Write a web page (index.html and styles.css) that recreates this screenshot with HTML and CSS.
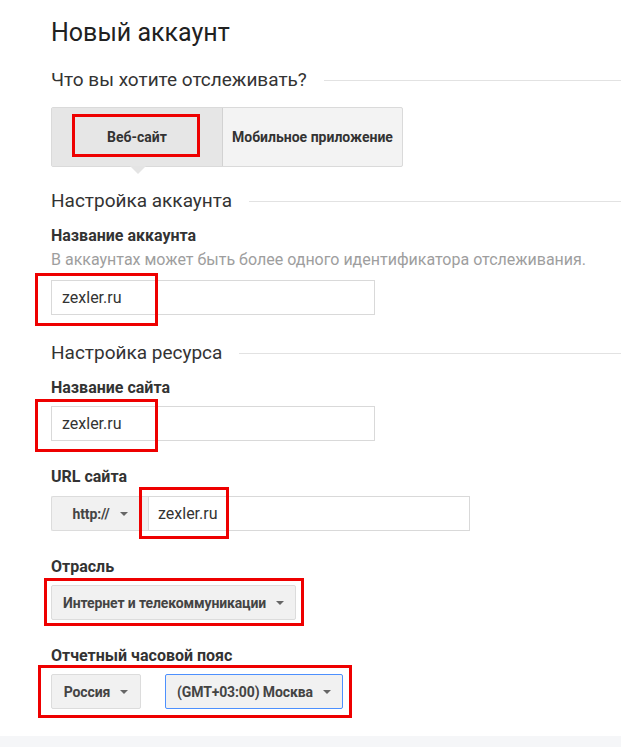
FILE: index.html
```html
<!DOCTYPE html>
<html lang="ru">
<head>
    <meta charset="UTF-8">
    <meta name="viewport" content="width=device-width, initial-scale=1.0">
    <title>Новый аккаунт</title>
    <link rel="stylesheet" href="styles.css">
</head>
<body>
    <div class="page">
        <h1 class="title">Новый аккаунт</h1>

        <div class="section-head section-track"><span>Что вы хотите отслеживать?</span></div>
        <div class="toggle">
            <div class="toggle-item active">
                Веб-сайт
                <span class="mark mark-web"></span>
            </div>
            <div class="toggle-item">Мобильное приложение</div>
        </div>

        <div class="section-head section-account"><span>Настройка аккаунта</span></div>
        <div class="label">Название аккаунта</div>
        <div class="help">В аккаунтах может быть более одного идентификатора отслеживания.</div>
        <div class="field field-first">
            <div class="input">zexler.ru</div>
            <span class="mark mark-input"></span>
        </div>

        <div class="section-head section-res"><span>Настройка ресурса</span></div>
        <div class="label">Название сайта</div>
        <div class="field">
            <div class="input">zexler.ru</div>
            <span class="mark mark-input"></span>
        </div>

        <div class="label label-gap">URL сайта</div>
        <div class="field url-row">
            <div class="select select-proto">http:// <span class="arrow"></span></div>
            <div class="input input-url">zexler.ru</div>
            <span class="mark mark-url"></span>
        </div>

        <div class="label label-gap">Отрасль</div>
        <div class="field field-inline">
            <div class="select">Интернет и телекоммуникации <span class="arrow"></span></div>
            <span class="mark mark-ind"></span>
        </div>

        <div class="label label-gap">Отчетный часовой пояс</div>
        <div class="field field-inline">
            <div class="select select-country">Россия <span class="arrow"></span></div>
            <div class="select select-zone">(GMT+03:00) Москва <span class="arrow"></span></div>
            <span class="mark mark-tz"></span>
        </div>
    </div>
    <div class="footer-band"></div>
</body>
</html>
```

FILE: styles.css
```css
body {
    margin: 0;
    font-family: Roboto, "Noto Sans", Arial, sans-serif;
    color: #333;
    background: #fff;
}
.page {
    padding: 18px 0 27px 51px;
}
.title {
    margin: 0;
    font-size: 25px;
    font-weight: 400;
    line-height: 30px;
    color: #212121;
}
.section-head {
    display: flex;
    align-items: center;
    font-size: 19px;
    line-height: 22px;
    color: #333;
}
.section-head::after {
    content: "";
    flex: 1;
    height: 1px;
    background: #e2e2e2;
    margin-left: 17px;
}
.section-track {
    margin-top: 21px;
}
.toggle {
    display: flex;
    width: 352px;
    height: 60px;
    box-sizing: border-box;
    margin-top: 16px;
    border: 1px solid #dadada;
    border-radius: 2px;
    background: #f3f3f3;
}
.toggle-item {
    position: relative;
    flex: 1;
    display: flex;
    align-items: center;
    justify-content: center;
    font-size: 14px;
    font-weight: 700;
    color: #333;
    white-space: nowrap;
}
.toggle-item.active {
    flex: none;
    width: 170px;
    background: #e6e6e6;
    border-right: 1px solid #d2d2d2;
}
.toggle-item.active::after {
    content: "";
    position: absolute;
    left: 78px;
    bottom: -8px;
    border-left: 8px solid transparent;
    border-right: 8px solid transparent;
    border-top: 8px solid #e4e4e4;
}
.section-account {
    margin-top: 23px;
}
.label {
    margin-top: 14px;
    font-size: 16px;
    font-weight: 700;
    line-height: 20px;
    color: #333;
}
.label-gap {
    margin-top: 26px;
}
.help {
    margin-top: 4px;
    font-size: 16px;
    line-height: 20px;
    color: #9e9e9e;
}
.field {
    position: relative;
    display: flex;
    margin-top: 8px;
    width: 324px;
}
.field-first {
    margin-top: 10px;
}
.input {
    flex: 1;
    height: 35px;
    box-sizing: border-box;
    padding: 0 10px;
    display: flex;
    align-items: center;
    border: 1px solid #d9d9d9;
    font-size: 16px;
    color: #333;
    background: #fff;
}
.section-res {
    margin-top: 27px;
}
.url-row {
    width: 419px;
    margin-top: 9px;
}
.field-inline {
    width: auto;
}
.select {
    display: flex;
    align-items: center;
    height: 35px;
    box-sizing: border-box;
    padding: 0 11px;
    border: 1px solid #dcdcdc;
    border-radius: 2px;
    background: #f1f1f1;
    font-size: 14px;
    font-weight: 700;
    letter-spacing: -0.12px;
    color: #444;
    white-space: nowrap;
}
.arrow {
    display: inline-block;
    margin-left: 10px;
    border-left: 4px solid transparent;
    border-right: 4px solid transparent;
    border-top: 4px solid #666;
}
.select-proto {
    width: 97px;
    justify-content: center;
    border-right: none;
    border-radius: 2px 0 0 2px;
}
.input-url {
    padding-left: 9px;
}
.select-country {
    width: 90px;
    justify-content: center;
}
.select-zone {
    margin-left: 24px;
    border-color: #4d90fe;
}
.mark {
    position: absolute;
    border: 3px solid #e00;
    box-sizing: border-box;
}
.mark-web {
    left: 20px;
    top: 6px;
    width: 128px;
    height: 43px;
}
.mark-input {
    left: -16px;
    top: -7px;
    width: 123px;
    height: 53px;
}
.mark-url {
    left: 88px;
    top: -9px;
    width: 90px;
    height: 52px;
}
.mark-ind {
    left: -7px;
    top: -7px;
    width: 260px;
    height: 48px;
}
.mark-tz {
    left: -13px;
    top: -9px;
    width: 314px;
    height: 53px;
}
.footer-band {
    height: 20px;
    background: #f5f6f8;
}
```
